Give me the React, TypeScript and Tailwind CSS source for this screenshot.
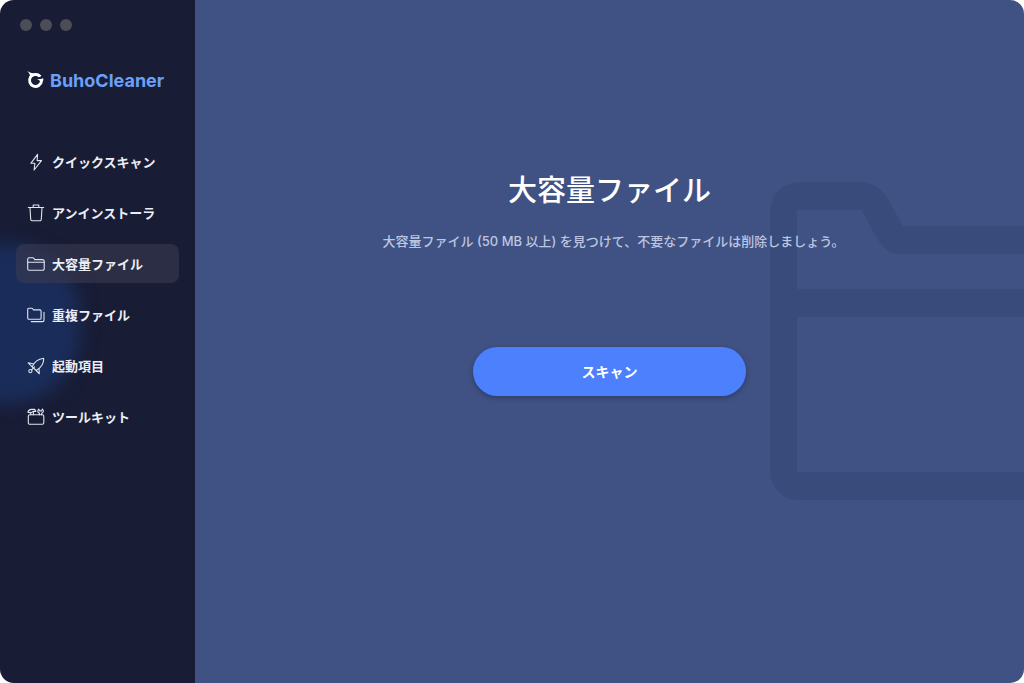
import { useState, type ReactNode } from "react";

function LogoMark() {
  return (
    <svg viewBox="0 0 18 20" className="h-5 w-[18px] shrink-0" aria-hidden="true">
      <path d="M13 6.400A6 6 0 1 0 14.500 11" fill="none" stroke="#fff" strokeWidth="2.900" />
      <path fill="#fff" d="M.3.8C2.500 2.600 5 3.500 8 3.500c2.600-.1 4.800.6 6.400 2.200l-1.500 1.300C9.500 5.500 6.500 5.700 4 8L2.200 7.600C3 6.200 3 5.500 2.700 4.600 2.200 3.200 1.300 2.200.3.8Z" />
      <path fill="#fff" d="M16.300 8.300c-2.200.9-4.600.2-6.300 1.700 1.400-.3 2.500.1 3.100 1.300l2.800.2c.4-1.100.5-2.100.4-3.200Z" />
    </svg>
  );
}

function Icon({ children }: { children: ReactNode }) {
  return (
    <svg
      viewBox="0 0 20 20"
      className="size-5 shrink-0"
      fill="none"
      stroke="#e1e4ee"
      strokeWidth="1.1"
      strokeLinecap="round"
      strokeLinejoin="round"
      aria-hidden="true"
    >
      {children}
    </svg>
  );
}

const items = [
  {
    label: "クイックスキャン",
    icon: <path d="M11.600 2.300 4.800 11.300h4.100L8.100 18 15.500 8.600h-4.400l.5-6.300Z" />,
  },
  {
    label: "アンインストーラ",
    icon: (
      <>
        <path d="M2.300 4.500h15.400M7.200 4.300V2h5.600v2.300" />
        <path d="M4 4.700 4.700 16.300a1.400 1.400 0 0 0 1.400 1.400h7.800a1.400 1.400 0 0 0 1.400-1.400L16 4.700" />
      </>
    ),
  },
  {
    label: "大容量ファイル",
    icon: (
      <>
        <path d="M1.700 14.700V5.200A1.500 1.500 0 0 1 3.200 3.700h3.500c.7 0 1 .3 1.400.9l.7 1h7.900a1.500 1.500 0 0 1 1.500 1.500v7.600a1.500 1.500 0 0 1-1.500 1.500H3.200a1.500 1.500 0 0 1-1.500-1.500Z" />
        <path d="M1.700 8.300h16.500" />
      </>
    ),
  },
  {
    label: "重複ファイル",
    icon: (
      <>
        <path d="M1.700 12.900V4.500c0-.8.500-1.300 1.300-1.300h2.600c.7 0 1 .3 1.300.8l.6.900h6.300c.8 0 1.300.5 1.300 1.300v6.700c0 .8-.5 1.300-1.300 1.300H3c-.8 0-1.300-.5-1.300-1.300Z" />
        <path d="M18 7.200v8.100c0 .8-.5 1.300-1.300 1.300H5.300" />
      </>
    ),
  },
  {
    label: "起動項目",
    icon: (
      <>
        <path d="M6.200 10.800C8 6.500 11.600 3 17.700 2.200c.2 5.500-2.700 9.500-7.500 12.300l-4-3.700Z" />
        <path d="M7.800 8 2.200 6.800l4 4M13 12.500l.3 5.300-3.100-3.300" />
        <circle cx="4.400" cy="15.100" r="1.600" />
        <path d="m5.600 13.900 3-3" />
      </>
    ),
  },
  {
    label: "ツールキット",
    icon: (
      <>
        <rect x="2.300" y="7.800" width="15.500" height="9.400" rx="1.500" />
        <path d="M4.700 7.800V5.400M1.900 5.300c.6-1.700 1.600-2.900 3.400-2.900h3.300l1.300 2H7L5 5.900 1.900 5.300Zm5.500 2.500V4.600" />
        <path d="M13.500 7.800V6.200c-2-.8-2.200-2.900-.8-4.100l1 1.800h1.700l1-1.800c1.600 1.200 1.100 3.500-.8 4.100v1.600" />
      </>
    ),
  },
];

function Sidebar() {
  const [selected, setSelected] = useState(2);
  return (
    <aside className="relative w-[195px] shrink-0 overflow-hidden bg-[#181c35]">
      <div
        className="absolute top-[244px] -left-20 h-[160px] w-[160px] rounded-[72px] bg-[#1a2d5a] blur-[9px]"
        aria-hidden="true"
      />
      <div className="relative flex flex-col">
        <div className="flex gap-2 px-5 pt-[19px]" aria-hidden="true">
          <span className="size-3 rounded-full bg-[#4c4e57]" />
          <span className="size-3 rounded-full bg-[#4c4e57]" />
          <span className="size-3 rounded-full bg-[#4c4e57]" />
        </div>
        <div className="mt-[35px] flex h-7 items-center gap-[5px] pl-[27px]">
          <LogoMark />
          <span className="font-[Inter,sans-serif] text-[18px] font-bold whitespace-nowrap text-[#6ba0f8]">
            BuhoCleaner
          </span>
        </div>
        <nav className="mt-12 flex flex-col gap-3 px-4">
          {items.map((item, i) => (
            <button
              key={item.label}
              type="button"
              aria-current={i === selected ? "page" : undefined}
              onClick={() => setSelected(i)}
              className={`flex h-[39px] items-center gap-1.5 rounded-lg pl-2.5 text-[13px] font-bold whitespace-nowrap text-[#eceef5] ${
                i === selected ? "bg-[#3b3b50]/60" : ""
              }`}
            >
              <Icon>{item.icon}</Icon>
              {item.label}
            </button>
          ))}
        </nav>
      </div>
    </aside>
  );
}

function FolderBackdrop() {
  return (
    <svg
      viewBox="0 0 254 320"
      className="absolute top-[181px] right-0 h-[320px] w-[254px]"
      aria-hidden="true"
    >
      <path
        fill="#394b7b"
        fillRule="evenodd"
        d="M0 34C0 12 12 1 34 1H88C104 1 112 8 119 20L133 45H254V73H130C119 73 112 66 105 54L92 29H27V108H254V136H27V291H254V319H30C11 319 0 306 0 287Z"
      />
    </svg>
  );
}

export default function App() {
  return (
    <div className="min-h-screen bg-white font-['Noto_Sans_CJK_JP',sans-serif]">
      <div className="flex min-h-screen overflow-hidden rounded-[14px]">
        <Sidebar />
        <main className="relative flex flex-1 flex-col items-center overflow-hidden bg-[#405283] px-6 pt-[166px]">
          <FolderBackdrop />
          <h1 className="relative text-[29px] leading-[44px] font-medium text-white">大容量ファイル</h1>
          <p className="relative mt-[21px] pl-2 font-[Inter,'Noto_Sans_CJK_JP',sans-serif] text-[13px] leading-5 font-medium text-[#bdc6e0]">
            大容量ファイル (50 MB 以上) を見つけて、不要なファイルは削除しましょう。
          </p>
          <button
            type="button"
            className="relative mt-24 h-[49px] w-[273px] rounded-full bg-[#4c80fd] text-[14px] font-bold text-white shadow-[0_2px_5px_rgba(30,35,70,0.5)]"
          >
            スキャン
          </button>
        </main>
      </div>
    </div>
  );
}
